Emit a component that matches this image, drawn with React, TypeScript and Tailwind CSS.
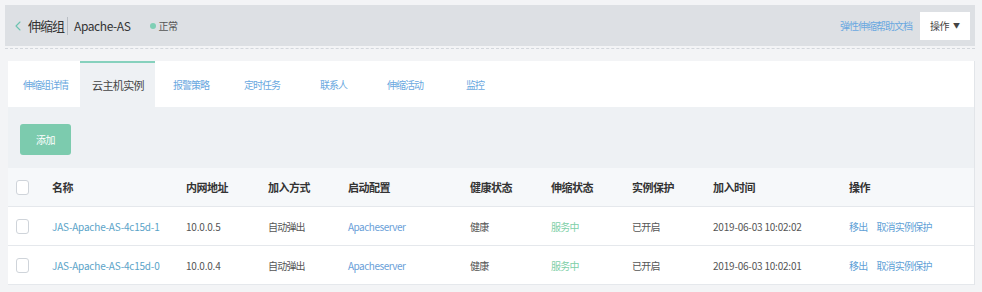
import { ChevronLeft } from 'lucide-react';

const tabs = ['伸缩组详情', '云主机实例', '报警策略', '定时任务', '联系人', '伸缩活动', '监控'];

const tabPos = [
  'w-[72px] pl-[15px]',
  'w-[75px] pl-[12px]',
  'w-[72px] pl-[18px]',
  'w-[76px] pl-[17px]',
  'w-[67px] pl-[17px]',
  'w-[79px] pl-[17px]',
  'w-[60px] pl-[17px]',
];

const rows = [
  { name: 'JAS-Apache-AS-4c15d-1', ip: '10.0.0.5', time: '2019-06-03 10:02:02' },
  { name: 'JAS-Apache-AS-4c15d-0', ip: '10.0.0.4', time: '2019-06-03 10:02:01' },
];

const cols =
  'grid grid-cols-[44px_134px_82px_80px_122px_81px_81px_81px_136px_1fr] items-center';

function Checkbox() {
  return <span className="ml-2 block w-[13px] h-[15px] rounded-[3px] border border-[#cfd4da] bg-white" />;
}

export default function App() {
  return (
    <div
      className="w-[982px] h-[292px] bg-[#f3f4f6] pt-[5px] px-[5px] text-[#444]"
      style={{ fontFamily: '"Noto Sans CJK SC", "Noto Sans", sans-serif' }}
    >
      <div className="h-[41px] w-[970px] bg-[#dde0e4] flex items-center pl-[5px] pr-[5px]">
        <ChevronLeft className="w-[16px] h-[16px] text-[#6cc3b0]" strokeWidth={1.6} />
        <span className="ml-[2px] text-[13px] tracking-[-1px] text-[#333]">伸缩组</span>
        <span className="ml-[3px] mr-[6px] h-[18px] w-px bg-[#b9bec4]" />
        <span className="text-[12px] text-[#333] tracking-[-0.4px]">Apache-AS</span>
        <span className="ml-[19px] w-[6px] h-[6px] rounded-full bg-[#7fcfb5]" />
        <span className="ml-[3px] text-[10px] tracking-[-0.5px] text-[#555]">正常</span>
        <span className="ml-auto text-[10px] tracking-[-1px] text-[#6aa8e0]">弹性伸缩帮助文档</span>
        <button className="ml-[8px] h-[28px] w-[50px] bg-white text-[10px] text-[#444] flex items-center justify-center gap-[4px]">
          <span className="tracking-[-0.5px]">操作</span>
          <span className="text-[7px]">▼</span>
        </button>
      </div>
      <div className="h-[3px] w-[970px] border-b border-dashed border-[#d3d7dc]" />

      <div className="mt-[12px] ml-[3px] w-[967px] h-[224px] border-r border-[#e2e5e9] flex flex-col">
        <div className="h-[46px] bg-white flex items-end">
          {tabs.map((t, i) => (
            <div
              key={t}
              className={
                i === 1
                  ? `h-[46px] ${tabPos[i]} bg-[#eef1f4] border-t-2 border-[#86d1bd] flex items-center text-[11px] tracking-[-0.6px] text-[#444]`
                  : `h-[46px] ${tabPos[i]} flex items-center text-[10px] tracking-[-1px] text-[#6aa8e0]`
              }
            >
              {t}
            </div>
          ))}
        </div>

        <div className="flex-1 bg-[#eef1f4]">
          <div className="pt-[17px] pl-[12px]">
            <button className="w-[51px] h-[31px] rounded-[3px] bg-[#7ccbae] text-white text-[10px] tracking-[-0.5px]">
              添加
            </button>
          </div>

          <div className="mt-[13px] bg-white">
            <div
              className={`${cols} h-[39px] bg-[#f6f8fa] border-b border-[#e5e8ec] text-[11px] tracking-[-0.5px] font-bold text-[#333]`}
            >
              <Checkbox />
              <span>名称</span>
              <span>内网地址</span>
              <span>加入方式</span>
              <span>启动配置</span>
              <span>健康状态</span>
              <span>伸缩状态</span>
              <span>实例保护</span>
              <span>加入时间</span>
              <span>操作</span>
            </div>
            {rows.map((r) => (
              <div
                key={r.name}
                className={`${cols} h-[39px] border-b border-[#e5e8ec] text-[10px] tracking-[-0.8px] text-[#555]`}
              >
                <Checkbox />
                <span className="text-[#5aa3c8] tracking-[-0.2px]">{r.name}</span>
                <span className="tracking-[-0.2px]">{r.ip}</span>
                <span>自动弹出</span>
                <span className="text-[#6aa0d8] tracking-[-0.5px]">Apacheserver</span>
                <span>健康</span>
                <span className="text-[#80cfa8]">服务中</span>
                <span>已开启</span>
                <span className="tracking-[-0.2px]">{r.time}</span>
                <span className="text-[#5f9fd6]">
                  移出<span className="ml-[9px]">取消实例保护</span>
                </span>
              </div>
            ))}
          </div>
        </div>
      </div>
    </div>
  );
}
